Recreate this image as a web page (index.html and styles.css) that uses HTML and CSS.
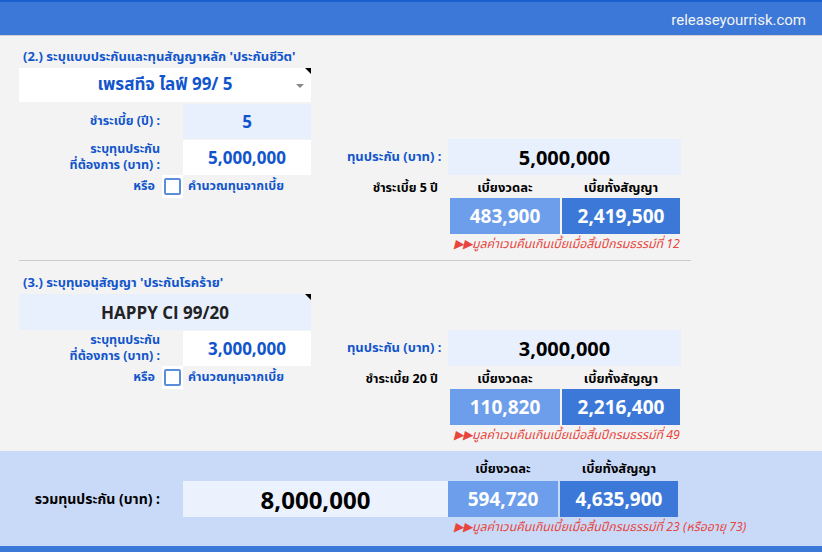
FILE: index.html
```html
<!DOCTYPE html>
<html lang="th">
<head>
  <meta charset="UTF-8">
  <title>คำนวณเบี้ยประกัน</title>
  <link rel="stylesheet" href="styles.css">
</head>
<body>
  <header class="topbar">
    <span class="site">releaseyourrisk.com</span>
  </header>

  <main class="sheet">
    <!-- main contract -->
    <section class="plan">
      <div class="title">(2.) ระบุแบบประกันและทุนสัญญาหลัก 'ประกันชีวิต'</div>
      <div class="product product-main">
        เพรสทีจ ไลฟ์ 99/ 5
        <span class="caret"></span>
        <span class="corner"></span>
      </div>

      <div class="label">ชำระเบี้ย (ปี) :</div>
      <div class="input input-soft">5</div>

      <div class="label label-two">ระบุทุนประกัน<br>ที่ต้องการ (บาท) :</div>
      <div class="input">5,000,000</div>
      <div class="sum-label">ทุนประกัน (บาท) :</div>
      <div class="sum-value">5,000,000</div>

      <div class="check-cell"><span>หรือ</span><span class="checkbox"><i></i></span></div>
      <div class="check-text">คำนวณทุนจากเบี้ย</div>
      <div class="pay-label">ชำระเบี้ย 5 ปี</div>
      <div class="heads"><span>เบี้ยงวดละ</span><span>เบี้ยทั้งสัญญา</span></div>

      <div class="boxes"><span class="box-light">483,900</span><span class="box-dark">2,419,500</span></div>
      <div class="note">▶▶มูลค่าเวนคืนเกินเบี้ยเมื่อสิ้นปีกรมธรรม์ที่ 12</div>
    </section>

    <div class="divider"></div>

    <!-- rider -->
    <section class="plan plan-rider">
      <div class="title">(3.) ระบุทุนอนุสัญญา 'ประกันโรคร้าย'</div>
      <div class="product product-rider">
        HAPPY CI 99/20
        <span class="corner"></span>
      </div>

      <div class="label label-two">ระบุทุนประกัน<br>ที่ต้องการ (บาท) :</div>
      <div class="input">3,000,000</div>
      <div class="sum-label">ทุนประกัน (บาท) :</div>
      <div class="sum-value">3,000,000</div>

      <div class="check-cell"><span>หรือ</span><span class="checkbox"><i></i></span></div>
      <div class="check-text">คำนวณทุนจากเบี้ย</div>
      <div class="pay-label">ชำระเบี้ย 20 ปี</div>
      <div class="heads"><span>เบี้ยงวดละ</span><span>เบี้ยทั้งสัญญา</span></div>

      <div class="boxes"><span class="box-light">110,820</span><span class="box-dark">2,216,400</span></div>
      <div class="note">▶▶มูลค่าเวนคืนเกินเบี้ยเมื่อสิ้นปีกรมธรรม์ที่ 49</div>
    </section>
  </main>

  <footer class="total">
    <div class="heads"><span>เบี้ยงวดละ</span><span>เบี้ยทั้งสัญญา</span></div>
    <div class="total-label">รวมทุนประกัน (บาท) :</div>
    <div class="total-value">8,000,000</div>
    <div class="boxes"><span class="box-light">594,720</span><span class="box-dark">4,635,900</span></div>
    <div class="note note-wide">▶▶มูลค่าเวนคืนเกินเบี้ยเมื่อสิ้นปีกรมธรรม์ที่ 23 (หรืออายุ 73)</div>
  </footer>
  <div class="bottombar"></div>
</body>
</html>
```

FILE: styles.css
```css
body {
  margin: 0;
  background: #f3f3f3;
  font-family: "Noto Sans", "Noto Sans Thai", sans-serif;
  color: #000;
  height: 552px;
  overflow: hidden;
}
.topbar {
  height: 33px;
  background: #3c78d8;
  border-top: 2px solid #1a5fd0;
  border-bottom: 1px solid #d0d0d0;
  display: flex;
  align-items: center;
  justify-content: flex-end;
  padding-right: 16px;
}
.site {
  color: #f3f3f3;
  font-family: Roboto, sans-serif;
  font-size: 15px;
  padding-top: 2px;
}
.sheet {
  padding: 10px 0 0 19px;
  height: 405px;
}
.plan {
  display: grid;
  grid-template-columns: 164px 128px 137px 233px;
  grid-template-rows: 22px 34px 2px 35px 36px 23px 36px 20px;
}
.plan-rider {
  grid-template-rows: 22px 36px 36px 23px 36px 20px;
}
.title {
  grid-column: 1 / 3;
  color: #1155cc;
  font-size: 13px;
  font-weight: bold;
  padding-left: 4px;
  align-self: center;
  white-space: nowrap;
}
.product {
  grid-column: 1 / 3;
  position: relative;
  display: flex;
  align-items: center;
  justify-content: center;
  font-weight: bold;
  font-size: 17px;
}
.product-main {
  grid-row: 2 / 4;
  height: 34px;
  background: #fff;
  color: #1155cc;
}
.product-rider {
  background: #e8f0fe;
  color: #222;
  font-family: "Open Sans", sans-serif;
  font-weight: 700;
  font-size: 17px;
}
.caret {
  position: absolute;
  right: 7px;
  top: 16px;
  border-left: 4px solid transparent;
  border-right: 4px solid transparent;
  border-top: 4px solid #888;
}
.corner {
  position: absolute;
  right: 0;
  top: 0;
  border-left: 6px solid transparent;
  border-top: 6px solid #000;
}
.label {
  grid-column: 1;
  text-align: right;
  padding-right: 23px;
  color: #1155cc;
  font-weight: bold;
  font-size: 12.5px;
  align-self: center;
}
.label-two {
  line-height: 16px;
}
.input {
  grid-column: 2;
  background: #fff;
  color: #1155cc;
  font-weight: bold;
  font-size: 17px;
  display: flex;
  align-items: center;
  justify-content: center;
  margin-top: 1px;
}
.input-soft {
  background: #e8f0fe;
  margin-top: 0;
}
.sum-label {
  grid-column: 3;
  align-self: center;
  padding-left: 36px;
  color: #1155cc;
  font-weight: bold;
  font-size: 13px;
}
.sum-value {
  grid-column: 4;
  background: #e8f0fe;
  display: flex;
  align-items: center;
  justify-content: center;
  font-weight: bold;
  font-size: 20px;
}
.check-cell {
  grid-column: 1;
  display: flex;
  justify-content: flex-end;
  align-items: center;
  gap: 7px;
  color: #1155cc;
  font-weight: bold;
  font-size: 12.5px;
}
.checkbox {
  width: 21px;
  height: 23px;
  background: #fff;
  display: flex;
  align-items: center;
  justify-content: center;
}
.checkbox i {
  width: 13px;
  height: 13px;
  border: 2px solid #5b8ed8;
  border-radius: 2px;
}
.check-text {
  grid-column: 2;
  align-self: center;
  padding-left: 5px;
  color: #1155cc;
  font-weight: bold;
  font-size: 12.5px;
}
.pay-label {
  grid-column: 3;
  align-self: end;
  text-align: right;
  padding-right: 10px;
  font-weight: bold;
  font-size: 12.5px;
}
.heads {
  display: grid;
  grid-template-columns: 110px 118px;
  gap: 2px;
  padding-left: 2px;
  align-self: end;
  font-weight: bold;
  font-size: 13px;
  text-align: center;
}
.plan .heads {
  grid-column: 4;
}
.boxes {
  grid-column: 4;
  display: grid;
  grid-template-columns: 110px 118px;
  gap: 2px;
  padding-left: 2px;
}
.boxes span {
  display: flex;
  align-items: center;
  justify-content: center;
  color: #fff;
  font-weight: bold;
  font-size: 19px;
}
.box-light {
  background: #6d9eeb;
}
.box-dark {
  background: #3c78d8;
}
.note {
  grid-column: 4;
  padding-left: 6px;
  align-self: center;
  color: #e8453c;
  font-style: italic;
  font-size: 12.3px;
  white-space: nowrap;
}
.divider {
  width: 672px;
  height: 1px;
  background: #cccccc;
  margin: 6px 0 11px;
}
.total {
  height: 95px;
  background: #c9daf8;
  padding-left: 19px;
  display: grid;
  grid-template-columns: 164px 265px 233px;
  grid-template-rows: 30px 36px 20px;
  box-sizing: border-box;
}
.total .heads {
  grid-column: 3;
  grid-row: 1;
  padding-left: 0;
  padding-bottom: 2px;
}
.total .boxes {
  grid-column: 3;
  grid-row: 2;
  padding-left: 0;
}
.total-label {
  grid-row: 2;
  grid-column: 1;
  align-self: center;
  text-align: right;
  padding-right: 23px;
  font-weight: bold;
  font-size: 14px;
}
.total-value {
  grid-row: 2;
  grid-column: 2;
  background: #ebf2fd;
  display: flex;
  align-items: center;
  justify-content: center;
  font-weight: bold;
  font-size: 24px;
}
.total .note {
  grid-column: 3;
  grid-row: 3;
}
.bottombar {
  height: 6px;
  background: #3c78d8;
}
```
